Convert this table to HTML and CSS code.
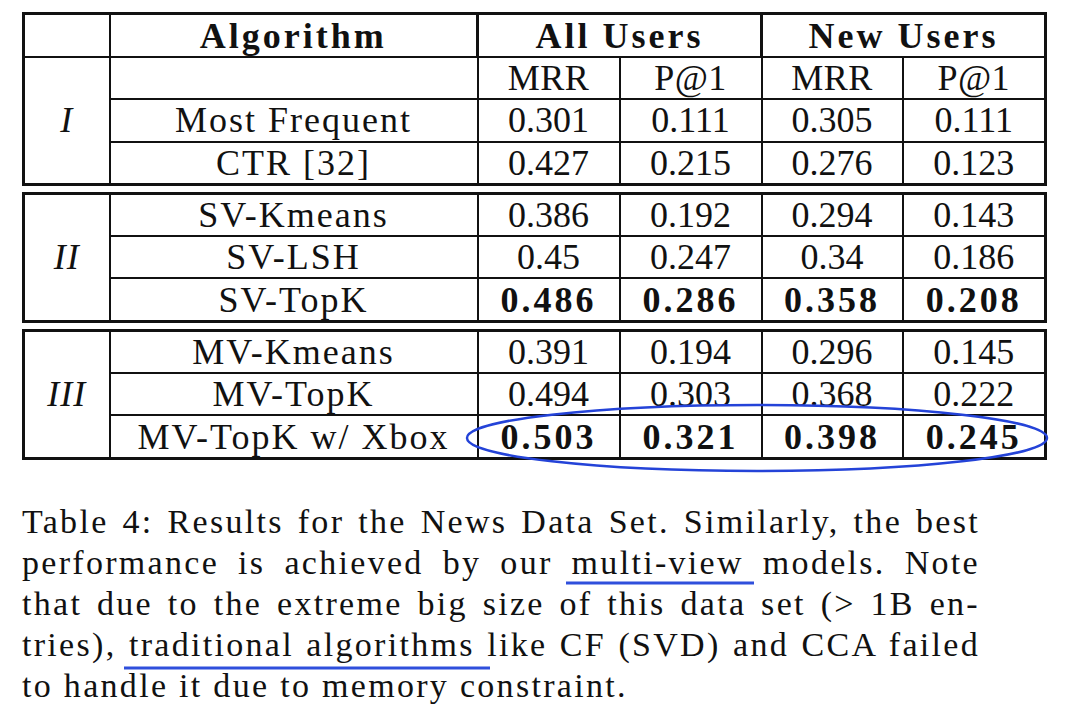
FILE: index.html
```html
<!DOCTYPE html>
<html lang="en">
<head>
<meta charset="utf-8">
<title>Table 4</title>
<link rel="stylesheet" href="styles.css">
</head>
<body>
<div class="page">
  <table class="tbl first">
    <colgroup><col class="c0"><col class="c1"><col class="c2"><col class="c3"><col class="c4"><col class="c5"></colgroup>
    <tr class="hdr">
      <td></td>
      <td class="bh sep">Algorithm</td>
      <td class="bh sep" colspan="2">All Users</td>
      <td class="bh" colspan="2">New Users</td>
    </tr>
    <tr>
      <td class="rom" rowspan="3">I</td>
      <td></td>
      <td class="sub">MRR</td><td class="sub">P@1</td><td class="sub">MRR</td><td class="sub">P@1</td>
    </tr>
    <tr>
      <td class="alg">Most Frequent</td>
      <td>0.301</td><td>0.111</td><td>0.305</td><td>0.111</td>
    </tr>
    <tr>
      <td class="alg">CTR [32]</td>
      <td>0.427</td><td>0.215</td><td>0.276</td><td>0.123</td>
    </tr>
  </table>

  <table class="tbl">
    <colgroup><col class="c0"><col class="c1"><col class="c2"><col class="c3"><col class="c4"><col class="c5"></colgroup>
    <tr>
      <td class="rom" rowspan="3">II</td>
      <td class="alg">SV-Kmeans</td>
      <td>0.386</td><td>0.192</td><td>0.294</td><td>0.143</td>
    </tr>
    <tr>
      <td class="alg">SV-LSH</td>
      <td>0.45</td><td>0.247</td><td>0.34</td><td>0.186</td>
    </tr>
    <tr>
      <td class="alg">SV-TopK</td>
      <td class="b">0.486</td><td class="b">0.286</td><td class="b">0.358</td><td class="b">0.208</td>
    </tr>
  </table>

  <table class="tbl">
    <colgroup><col class="c0"><col class="c1"><col class="c2"><col class="c3"><col class="c4"><col class="c5"></colgroup>
    <tr>
      <td class="rom" rowspan="3">III</td>
      <td class="alg">MV-Kmeans</td>
      <td>0.391</td><td>0.194</td><td>0.296</td><td>0.145</td>
    </tr>
    <tr>
      <td class="alg">MV-TopK</td>
      <td>0.494</td><td>0.303</td><td>0.368</td><td>0.222</td>
    </tr>
    <tr>
      <td class="alg">MV-TopK w/ Xbox</td>
      <td class="b">0.503</td><td class="b">0.321</td><td class="b">0.398</td><td class="b">0.245</td>
    </tr>
  </table>

  <p class="caption">
    <span class="ln">Table 4: Results for the News Data Set. Similarly, the best</span>
    <span class="ln">performance is achieved by our multi-view models. Note</span>
    <span class="ln">that due to the extreme big size of this data set (&gt; 1B en-</span>
    <span class="ln">tries), traditional algorithms like CF (SVD) and CCA failed</span>
    <span class="ln last">to handle it due to memory constraint.</span>
  </p>

  <svg class="marks" width="1080" height="716" viewBox="0 0 1080 716" aria-hidden="true">
    <ellipse cx="757" cy="438" rx="290" ry="33" fill="none" stroke="#2443d8" stroke-width="2.5"/>
    <line x1="566" y1="583" x2="754" y2="583" stroke="#2f4fdc" stroke-width="3"/>
    <line x1="124" y1="668" x2="490" y2="668" stroke="#2f4fdc" stroke-width="3"/>
  </svg>
</div>
</body>
</html>
```

FILE: styles.css
```css
html, body {
  margin: 0;
  padding: 0;
  background: #ffffff;
}

.page {
  position: relative;
  width: 1080px;
  height: 716px;
  overflow: hidden;
  padding: 12px 0 0 22px;
  box-sizing: border-box;
  font-family: "Liberation Serif", "Times New Roman", serif;
  color: #111;
}

.tbl {
  border-collapse: collapse;
  table-layout: fixed;
  width: 1022px;
  border: 3px solid #111;
  font-size: 36px;
  margin-bottom: 6px;
}

.c0 { width: 86px; }
.c1 { width: 368px; }
.c2 { width: 142px; }
.c3 { width: 142px; }
.c4 { width: 141px; }
.c5 { width: 143px; }

.tbl td {
  border: 2px solid #111;
  padding: 0;
  height: 40.3px;
  text-align: center;
  vertical-align: middle;
  line-height: 38px;
  white-space: nowrap;
}

.tbl .hdr td {
  height: 41px;
}

.tbl td.bh {
  font-weight: bold;
  letter-spacing: 3px;
}

.tbl .hdr td.sep {
  border-right-width: 3px;
}

.tbl td.rom {
  font-style: italic;
  letter-spacing: 1px;
}

.tbl td.alg {
  letter-spacing: 2px;
}

.tbl td.sub {
  letter-spacing: 0.5px;
}

.tbl td.b {
  font-weight: bold;
  letter-spacing: 3px;
}

.caption {
  margin: 41px 0 0 0;
  width: 958px;
  font-size: 34px;
  line-height: 41.2px;
  letter-spacing: 2.3px;
}

.caption .ln {
  display: block;
  text-align: justify;
  text-align-last: justify;
  white-space: nowrap;
}

.caption .ln.last {
  text-align: left;
  text-align-last: left;
}

.marks {
  position: absolute;
  left: 0;
  top: 0;
  pointer-events: none;
}
```
